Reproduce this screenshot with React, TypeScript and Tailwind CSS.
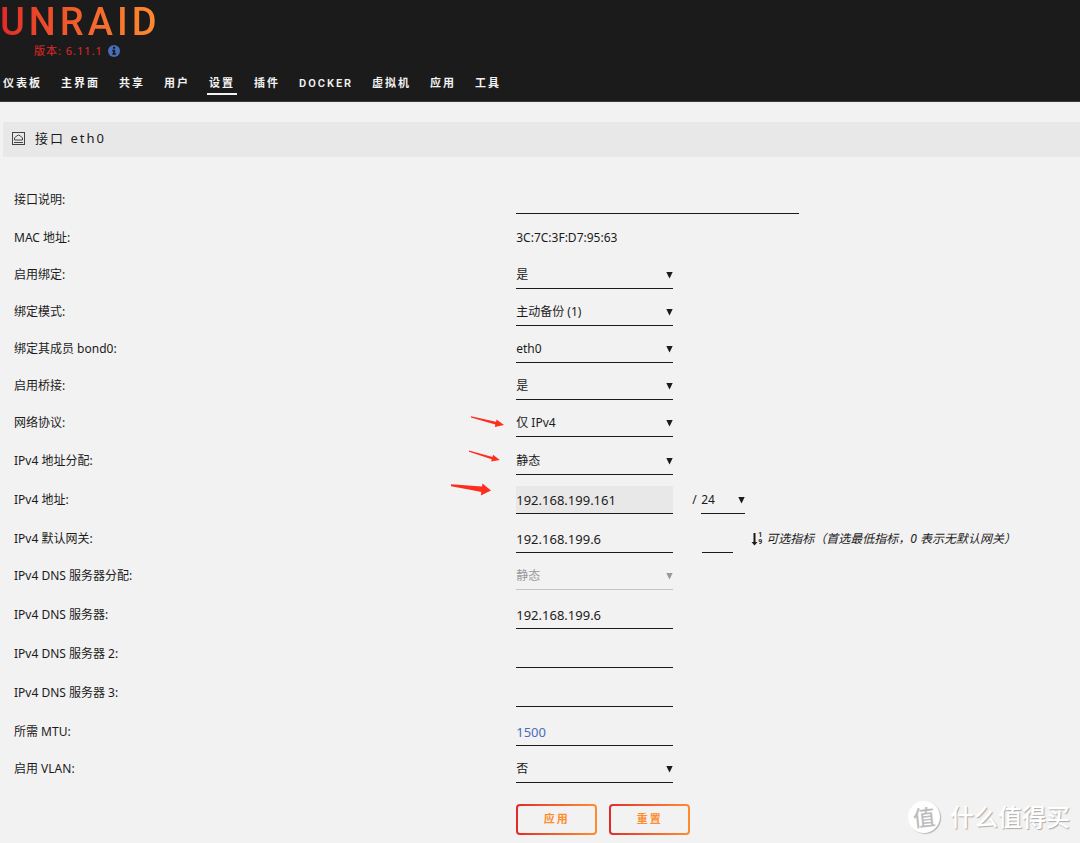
import type { ReactNode } from "react";
import { clsx } from "clsx";

const navItems = ["仪表板", "主界面", "共享", "用户", "设置", "插件", "DOCKER", "虚拟机", "应用", "工具"];

function Caret() {
  return (
    <svg
      className="pointer-events-none absolute right-0 top-1/2 h-2 w-[7px] -translate-y-1/2"
      viewBox="0 0 7 8"
      fill="currentColor"
      aria-hidden="true"
    >
      <path d="M0.3 1h6.4L3.5 7.4z" />
    </svg>
  );
}

function Row({ id, label, select, children }: { id?: string; label: string; select?: boolean; children: ReactNode }) {
  return (
    <div className={clsx("grid grid-cols-[47.8%_1fr] items-end", select ? "h-[37px]" : "h-[39px]")}>
      <label htmlFor={id} className="pl-3.5 leading-7">
        {label}
      </label>
      <div className="flex items-end">{children}</div>
    </div>
  );
}

function SelectBox({
  id,
  value,
  width = "w-[157px]",
  disabled,
  label,
}: {
  id: string;
  value: string;
  width?: string;
  disabled?: boolean;
  label?: string;
}) {
  return (
    <div
      className={clsx(
        "relative h-7 border-b",
        width,
        disabled ? "border-[#c4c4c4] text-[#999999]" : "border-[#1c1b1b]"
      )}
    >
      <select id={id} aria-label={label} disabled={disabled} className="h-full w-full appearance-none bg-transparent outline-none">
        <option>{value}</option>
      </select>
      <Caret />
    </div>
  );
}

function TextBox({
  id,
  value,
  width = "w-[157px]",
  className,
  label,
}: {
  id: string;
  value?: string;
  width?: string;
  className?: string;
  label?: string;
}) {
  return (
    <input
      id={id}
      type="text"
      aria-label={label}
      defaultValue={value}
      className={clsx("h-7 border-b border-[#1c1b1b] text-[13px] outline-none", width, className)}
    />
  );
}

function GradientButton({ type, children }: { type: "submit" | "reset"; children: ReactNode }) {
  return (
    <button type={type} className="h-[31px] w-[81px] rounded bg-linear-to-r from-[#e22828] to-[#ff8c2f] p-0.5">
      <span className="flex h-full items-center justify-center rounded-[2px] bg-[#f2f2f2] text-[11px] font-bold tracking-[2px] text-[#ff8c2f]">
        {children}
      </span>
    </button>
  );
}

function InfoIcon() {
  return (
    <svg className="size-3" viewBox="0 0 12 12" aria-hidden="true">
      <circle cx="6" cy="6" r="6" fill="#486dba" />
      <path d="M5 1.800h2.200v1.900H5zM4.200 4.700h3v3.600h0.900v1.500H4.200V8.300h0.900V6.200H4.200z" fill="#1c1b1b" />
    </svg>
  );
}

function Header() {
  return (
    <header className="h-[102px] border-b border-[#3a3a3a] bg-[#1c1b1b] text-[#f2f2f2]">
      <a
        href="#"
        className="block w-fit bg-linear-to-r from-[#e22828] to-[#ff8c2f] bg-clip-text font-['Roboto',sans-serif] text-[38px] font-medium leading-[44px] tracking-[4px] text-transparent"
      >
        UNRAID
      </a>
      <div className="flex h-3.5 items-center gap-[5px] pl-[34px] text-[11px] tracking-[1px] text-[#e22828]">
        <span>版本: 6.11.1</span>
        <InfoIcon />
      </div>
      <nav className="mt-[17px] flex gap-[15px] pl-px font-['Roboto','Noto_Sans_CJK_SC',sans-serif] text-[11px] font-semibold tracking-[2px]">
        {navItems.map((item) => (
          <a
            key={item}
            href="#"
            className={clsx("border-b-2 px-0.5 leading-[18px]", item === "设置" ? "border-[#f2f2f2]" : "border-transparent")}
          >
            {item}
          </a>
        ))}
      </nav>
    </header>
  );
}

function PortIcon() {
  return (
    <svg className="size-[13px]" viewBox="0 0 13 13" fill="none" stroke="#444444" aria-hidden="true">
      <rect x="0.5" y="0.5" width="12" height="12" />
      <path d="M2.500 8V6L4.500 4L6.500 3L8.500 4L10.500 6V8z" />
      <path d="M2 10.500h9" />
    </svg>
  );
}

function SortIcon() {
  return (
    <span className="flex items-center not-italic" aria-hidden="true">
      <svg className="h-3.5 w-[7px]" viewBox="0 0 7 14" fill="currentColor">
        <path d="M2.500 1h2v9h2L3.500 13.500L0.500 10h2z" />
      </svg>
      <span className="flex w-1.5 flex-col font-['Roboto',sans-serif] text-[7px] font-bold leading-[7px]">
        <span>1</span>
        <span>9</span>
      </span>
    </span>
  );
}

function Arrows() {
  return (
    <svg className="pointer-events-none absolute left-[450px] top-[312px] h-[86px] w-14" viewBox="450 414 56 86" fill="#ff2d1e" aria-hidden="true">
      <path d="M471 416.300L496 421.800L496.500 419.600L504 425L494.800 427L495.300 424.600L471 417.400z" />
      <path d="M469 450.600L492.500 457L493 454.800L499.800 460L491.200 461.600L491.700 459.200L469 451.800z" />
      <path d="M451 484.200L482 486.600L482.500 483.400L491 490.600L480.800 495.400L481.300 492L470 489.800L451 486.200z" />
    </svg>
  );
}

export default function App() {
  return (
    <div className="relative min-h-screen bg-[#f2f2f2] font-['Noto_Sans','Noto_Sans_CJK_SC',sans-serif] text-xs text-[#1c1b1b]">
      <Header />
      <main className="relative pt-5">
        <h1 className="ml-[3px] flex h-[35px] items-center gap-2.5 bg-[#e8e8e8] pb-0.5 pl-[9px] text-[13px] tracking-[2px]">
          <PortIcon />
          <span>接口 eth0</span>
        </h1>
        <form className="mt-[18px]" onSubmit={(e) => e.preventDefault()}>
          <Row id="description" label="接口说明:">
            <TextBox id="description" width="w-[283px]" />
          </Row>
          <div className="grid h-[38px] grid-cols-[47.8%_1fr] items-end leading-7">
            <span className="pl-3.5">MAC 地址:</span>
            <span>3C:7C:3F:D7:95:63</span>
          </div>
          <Row id="bonding" label="启用绑定:" select>
            <SelectBox id="bonding" value="是" />
          </Row>
          <Row id="bond-mode" label="绑定模式:" select>
            <SelectBox id="bond-mode" value="主动备份 (1)" />
          </Row>
          <Row id="bond-members" label="绑定其成员 bond0:" select>
            <SelectBox id="bond-members" value="eth0" />
          </Row>
          <Row id="bridging" label="启用桥接:" select>
            <SelectBox id="bridging" value="是" />
          </Row>
          <Row id="protocol" label="网络协议:" select>
            <SelectBox id="protocol" value="仅 IPv4" />
          </Row>
          <div className="pt-px">
            <Row id="assignment" label="IPv4 地址分配:" select>
              <SelectBox id="assignment" value="静态" />
            </Row>
            <Row id="address" label="IPv4 地址:">
              <TextBox id="address" value="192.168.199.161" className="bg-[#e8e8e8]" />
              <span className="ml-[19px] w-[9px] leading-7">/</span>
              <SelectBox id="netmask" value="24" width="w-11" label="子网掩码" />
            </Row>
            <Row id="gateway" label="IPv4 默认网关:">
              <TextBox id="gateway" value="192.168.199.6" />
              <TextBox id="metric" width="w-[31px]" className="ml-[29px]" label="指标" />
              <span className="ml-[18px] flex h-7 items-center gap-0.5 whitespace-nowrap italic">
                <SortIcon />
                可选指标（首选最低指标，0 表示无默认网关）
              </span>
            </Row>
            <Row id="dns-assignment" label="IPv4 DNS 服务器分配:" select>
              <SelectBox id="dns-assignment" value="静态" disabled />
            </Row>
            <Row id="dns1" label="IPv4 DNS 服务器:">
              <TextBox id="dns1" value="192.168.199.6" />
            </Row>
            <Row id="dns2" label="IPv4 DNS 服务器 2:">
              <TextBox id="dns2" />
            </Row>
            <Row id="dns3" label="IPv4 DNS 服务器 3:">
              <TextBox id="dns3" />
            </Row>
          </div>
          <Row id="mtu" label="所需 MTU:">
            <TextBox id="mtu" value="1500" className="text-[#486dba]" />
          </Row>
          <Row id="vlan" label="启用 VLAN:" select>
            <SelectBox id="vlan" value="否" />
          </Row>
          <div className="mt-[21px] grid grid-cols-[47.8%_1fr] pb-2">
            <div className="col-start-2 flex gap-3">
              <GradientButton type="submit">应用</GradientButton>
              <GradientButton type="reset">重置</GradientButton>
            </div>
          </div>
        </form>
        <Arrows />
      </main>
      <div className="pointer-events-none absolute bottom-2.5 right-2.5 flex items-center gap-2.5 text-white">
        <span className="flex size-8 -rotate-6 items-center justify-center rounded-full bg-white text-[22px] font-medium leading-none text-[#bdbdbd] shadow-[1px_1px_1px_#b5b5b5]">
          值
        </span>
        <span className="text-2xl font-medium leading-8 [text-shadow:1px_1px_1px_#ababab]">什么值得买</span>
      </div>
    </div>
  );
}
